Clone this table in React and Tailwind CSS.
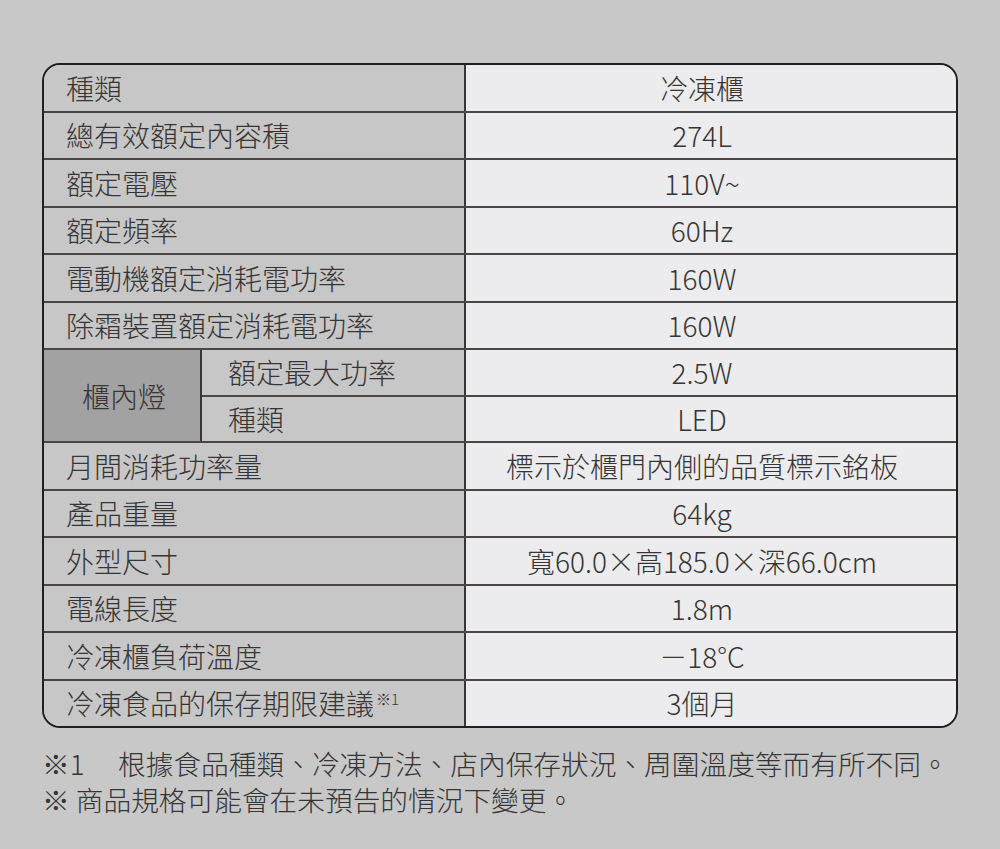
import React from "react";

const rowsTop = [
  ["種類", "冷凍櫃"],
  ["總有效額定內容積", "274L"],
  ["額定電壓", "110V~"],
  ["額定頻率", "60Hz"],
  ["電動機額定消耗電功率", "160W"],
  ["除霜裝置額定消耗電功率", "160W"],
];
const rowsBottom = [
  ["月間消耗功率量", "標示於櫃門內側的品質標示銘板"],
  ["產品重量", "64kg"],
  ["外型尺寸", "寬60.0×高185.0×深66.0cm"],
  ["電線長度", "1.8m"],
  ["冷凍櫃負荷溫度", "－18°C"],
  ["冷凍食品的保存期限建議", "3個月", true],
];

function Row({ label, value, first, sup }) {
  return (
    <div className={"flex flex-1 " + (first ? "" : "border-t-2 border-[#4a4646]")}>
      <div className="w-[420px] flex items-center pl-[22px] bg-[#c7c7c7]">
        {label}
        {sup && <span className="text-[15px] self-start mt-[10px] ml-[2px]">※1</span>}
      </div>
      <div className="flex-1 flex items-center justify-center border-l-2 border-[#3a3636] bg-[#ececef] pr-[18px]">
        {value}
      </div>
    </div>
  );
}

export default function App() {
  return (
    <div
      className="w-[1000px] h-[849px] bg-[#c8c8c8] text-[#363434] font-light"
      style={{ fontFamily: '"Noto Sans CJK TC", "Noto Sans", sans-serif' }}
    >
      <div className="pt-[63px] pl-[42px]">
        <div className="w-[916px] h-[665px] border-2 border-[#231f1f] rounded-[18px] overflow-hidden flex flex-col text-[28px] leading-none">
          {rowsTop.map((r, i) => (
            <Row key={i} label={r[0]} value={r[1]} first={i === 0} />
          ))}
          <div className="flex flex-[2] border-t-2 border-[#4a4646]">
            <div className="w-[158px] bg-[#a2a2a2] flex items-center justify-center border-r-2 border-[#3a3636] pl-[4px]">
              櫃內燈
            </div>
            <div className="flex-1 flex flex-col">
              <div className="flex flex-1">
                <div className="w-[262px] bg-[#c7c7c7] flex items-center pl-[26px]">額定最大功率</div>
                <div className="flex-1 flex items-center justify-center border-l-2 border-[#3a3636] bg-[#ececef] pr-[18px]">2.5W</div>
              </div>
              <div className="flex flex-1 border-t-2 border-[#4a4646]">
                <div className="w-[262px] bg-[#c7c7c7] flex items-center pl-[26px]">種類</div>
                <div className="flex-1 flex items-center justify-center border-l-2 border-[#3a3636] bg-[#ececef] pr-[18px]">LED</div>
              </div>
            </div>
          </div>
          {rowsBottom.map((r, i) => (
            <Row key={i} label={r[0]} value={r[1]} sup={r[2]} />
          ))}
        </div>
        <div className="mt-[17px] text-[27.7px] leading-[36px] flex flex-col gap-0">
          <div className="flex h-[36px] items-center">
            <span className="w-[76px]">※1</span>
            <span>根據食品種類、冷凍方法、店內保存狀況、周圍溫度等而有所不同。</span>
          </div>
          <div className="h-[36px] flex items-center">※ 商品規格可能會在未預告的情況下變更。</div>
        </div>
      </div>
    </div>
  );
}
